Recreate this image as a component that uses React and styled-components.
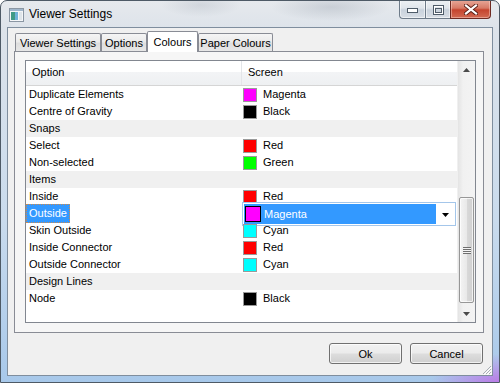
import React from "react";
import styled, { createGlobalStyle } from "styled-components";

const GlobalStyle = createGlobalStyle`
  html, body {
    margin: 0;
    padding: 0;
    background: #ffffff;
  }
  body {
    font-family: "Liberation Sans", Arial, sans-serif;
    font-size: 11px;
    color: #000;
  }
  * {
    box-sizing: border-box;
  }
`;

const rows = [
  { label: "Duplicate Elements", color: "#ff00ff", name: "Magenta" },
  { label: "Centre of Gravity", color: "#000000", name: "Black" },
  { group: "Snaps" },
  { label: "Select", color: "#ff0000", name: "Red" },
  { label: "Non-selected", color: "#00ff00", name: "Green" },
  { group: "Items" },
  { label: "Inside", color: "#ff0000", name: "Red" },
  { label: "Outside", color: "#ff00ff", name: "Magenta", editing: true },
  { label: "Skin Outside", color: "#00ffff", name: "Cyan" },
  { label: "Inside Connector", color: "#ff0000", name: "Red" },
  { label: "Outside Connector", color: "#00ffff", name: "Cyan" },
  { group: "Design Lines" },
  { label: "Node", color: "#000000", name: "Black" },
];

const tabs = [
  { label: "Viewer Settings", w: 86 },
  { label: "Options", w: 46 },
  { label: "Colours", w: 51, active: true },
  { label: "Paper Colours", w: 75 },
];

const WindowIcon = () => (
  <svg width="15" height="14" viewBox="0 0 15 14">
    <rect x="0.5" y="0.5" width="14" height="13" fill="#f4f6f8" stroke="#8a96a3" />
    <rect x="1" y="1" width="13" height="2" fill="#9fb6cc" />
    <rect x="2" y="4" width="4" height="8" fill="#3f9a86" />
    <rect x="6" y="4" width="3" height="8" fill="#6fb2d8" />
    <rect x="10" y="4" width="3" height="8" fill="#dfe5ea" />
  </svg>
);

const CloseGlyph = () => (
  <svg width="14" height="11" viewBox="0 0 14 11">
    <path d="M2 1.5 L12 9.5 M12 1.5 L2 9.5" stroke="#5a1f16" strokeWidth="4" strokeLinecap="square" />
    <path d="M2 1.5 L12 9.5 M12 1.5 L2 9.5" stroke="#ffffff" strokeWidth="2.2" strokeLinecap="square" />
  </svg>
);

const MinGlyph = () => (
  <svg width="11" height="5" viewBox="0 0 11 5">
    <rect x="0.5" y="0.5" width="10" height="4" fill="#ffffff" stroke="#4f5c69" />
  </svg>
);

const MaxGlyph = () => (
  <svg width="11" height="10" viewBox="0 0 11 10">
    <rect x="0.5" y="0.5" width="10" height="9" fill="none" stroke="#4f5c69" />
    <rect x="1.5" y="1.5" width="8" height="7" fill="none" stroke="#ffffff" />
    <rect x="2.5" y="3.5" width="6" height="4" fill="none" stroke="#4f5c69" />
  </svg>
);

const Arrow = ({ dir, color = "#4a4a4a" }) => (
  <svg width="7" height="4" viewBox="0 0 7 4">
    {dir === "up" ? (
      <path d="M0 4 L3.5 0 L7 4 Z" fill={color} />
    ) : (
      <path d="M0 0 L7 0 L3.5 4 Z" fill={color} />
    )}
  </svg>
);

const Grip = () => (
  <svg width="10" height="10" viewBox="0 0 10 10">
    <path d="M9 1 L1 9 M9 4 L4 9 M9 7 L7 9" stroke="#a8aeb5" strokeWidth="1" />
    <path d="M10 2 L2 10 M10 5 L5 10 M10 8 L8 10" stroke="#ffffff" strokeWidth="1" />
  </svg>
);

const App = () => {
  return (
    <>
      <GlobalStyle />
      <Window>
        <TitleBar>
          <IconWrap>
            <WindowIcon />
          </IconWrap>
          <Title>Viewer Settings</Title>
          <Captions>
            <CapButton $w={26} $first>
              <MinGlyph />
            </CapButton>
            <CapButton $w={25}>
              <MaxGlyph />
            </CapButton>
            <CloseButton>
              <CloseGlyph />
            </CloseButton>
          </Captions>
        </TitleBar>
        <Client>
          <TabStrip>
            {tabs.map((t) => (
              <Tab key={t.label} $w={t.w} className={t.active ? "active" : ""}>
                {t.label}
              </Tab>
            ))}
          </TabStrip>
          <TabPanel>
            <ListBox>
              <ListBody>
                <Header>
                  <HeadCell $w={215}>Option</HeadCell>
                  <HeadSep />
                  <HeadCell>Screen</HeadCell>
                </Header>
                {rows.map((r, i) =>
                  r.group ? (
                    <GroupRow key={i}>{r.group}</GroupRow>
                  ) : (
                    <Row key={i}>
                      <NameCell>
                        {r.editing ? <Selected>{r.label}</Selected> : r.label}
                      </NameCell>
                      <ValueCell>
                        <Swatch $color={r.color} />
                        <ValueText>{r.name}</ValueText>
                        {r.editing && (
                          <Combo>
                            <ComboValue>
                              <Swatch $color={r.color} $dark />
                              <ComboText>{r.name}</ComboText>
                            </ComboValue>
                            <ComboArrow>
                              <Arrow dir="down" color="#000" />
                            </ComboArrow>
                          </Combo>
                        )}
                      </ValueCell>
                    </Row>
                  )
                )}
              </ListBody>
              <ScrollBar>
                <ScrollArrow>
                  <Arrow dir="up" />
                </ScrollArrow>
                <Track>
                  <Thumb $top={119} $h={106}>
                    <ThumbGrip />
                  </Thumb>
                </Track>
                <ScrollArrow>
                  <Arrow dir="down" />
                </ScrollArrow>
              </ScrollBar>
            </ListBox>
          </TabPanel>
          <ButtonRow>
            <Button>Ok</Button>
            <Button>Cancel</Button>
          </ButtonRow>
          <ResizeGrip>
            <Grip />
          </ResizeGrip>
        </Client>
      </Window>
    </>
  );
};

export default App;

const Window = styled.div`
  position: relative;
  width: 500px;
  height: 383px;
  border: 1px solid #4e5a66;
  border-radius: 7px 7px 0 0;
  padding: 0 6px 6px 6px;
  display: flex;
  flex-direction: column;
  overflow: hidden;
  background:
    radial-gradient(ellipse 70px 30px at 500px 383px, rgba(190, 110, 230, 0.9), rgba(190, 110, 230, 0) 100%),
    radial-gradient(ellipse 60px 14px at 330px 6px, rgba(150, 160, 172, 0.35), rgba(150, 160, 172, 0) 100%),
    radial-gradient(ellipse 40px 12px at 200px 4px, rgba(150, 160, 172, 0.25), rgba(150, 160, 172, 0) 100%),
    linear-gradient(180deg, #e6e9ed 0px, #dde3ea 28px, #c9dbed 220px, #a7c8ea 383px);
`;

const TitleBar = styled.div`
  height: 26px;
  display: flex;
  align-items: flex-start;
`;

const IconWrap = styled.div`
  margin: 7px 0 0 2px;
  width: 15px;
  height: 14px;
  display: flex;
`;

const Title = styled.div`
  margin: 6px 0 0 5px;
  font-size: 12px;
  line-height: 15px;
  color: #000;
`;

const Captions = styled.div`
  margin-left: auto;
  margin-right: 2px;
  margin-top: -1px;
  display: flex;
  height: 19px;
`;

const CapButton = styled.div`
  width: ${(p) => p.$w}px;
  height: 19px;
  display: flex;
  align-items: center;
  justify-content: center;
  padding-top: 2px;
  border: 1px solid #6e7b89;
  border-top: none;
  border-right: none;
  border-radius: ${(p) => (p.$first ? "0 0 0 4px" : "0")};
  background: linear-gradient(180deg, #eef1f4 0%, #e0e5eb 45%, #c9d2dc 55%, #d8dee5 100%);
  box-shadow: inset 0 0 0 1px rgba(255, 255, 255, 0.55);
`;

const CloseButton = styled.div`
  width: 41px;
  height: 19px;
  display: flex;
  align-items: center;
  justify-content: center;
  padding-top: 1px;
  border: 1px solid #6e2a22;
  border-top: none;
  border-radius: 0 0 4px 0;
  background: linear-gradient(180deg, #e8a99a 0%, #d77a66 45%, #c5442e 55%, #d26a52 100%);
  box-shadow: inset 0 0 0 1px rgba(255, 220, 210, 0.45);
`;

const Client = styled.div`
  position: relative;
  flex: 1;
  display: flex;
  flex-direction: column;
  border: 1px solid #7f8e9e;
  background: #f0f0f0;
  padding: 3px 8px 0 6px;
`;

const TabStrip = styled.div`
  height: 20px;
  display: flex;
  align-items: flex-end;
  padding-left: 1px;
  position: relative;
  z-index: 1;
`;

const Tab = styled.div`
  width: ${(p) => p.$w}px;
  height: 18px;
  border: 1px solid #898c95;
  border-bottom: none;
  border-radius: 2px 2px 0 0;
  display: flex;
  align-items: center;
  justify-content: center;
  padding-top: 1px;
  font-size: 11px;
  color: #000;
  background: linear-gradient(180deg, #f5f5f5 0%, #ebebeb 45%, #dedede 55%, #e7e7e7 100%);
  &.active {
    height: 21px;
    margin-bottom: -1px;
    padding-bottom: 2px;
    background: #ffffff;
  }
`;

const TabPanel = styled.div`
  height: 282px;
  border: 1px solid #898c95;
  background: #f6f6f6;
  padding: 8px 7px 9px 10px;
  display: flex;
`;

const ListBox = styled.div`
  flex: 1;
  display: flex;
  border: 1px solid #828790;
  background: #ffffff;
`;

const ListBody = styled.div`
  width: 431px;
  display: flex;
  flex-direction: column;
`;

const Header = styled.div`
  height: 25px;
  display: flex;
  border-bottom: 1px solid #d5d5d5;
  background: linear-gradient(180deg, #ffffff 0%, #ffffff 45%, #f3f4f6 45%, #eef0f2 100%);
`;

const HeadCell = styled.div`
  width: ${(p) => (p.$w ? `${p.$w}px` : "auto")};
  flex: ${(p) => (p.$w ? "none" : "1")};
  padding-left: 6px;
  line-height: 23px;
  font-size: 11px;
  color: #000;
`;

const HeadSep = styled.div`
  width: 1px;
  background: #e3e5e8;
`;

const Row = styled.div`
  height: 17px;
  display: flex;
  align-items: center;
`;

const GroupRow = styled.div`
  height: 17px;
  line-height: 17px;
  padding-left: 3px;
  background: #f0f0f0;
`;

const NameCell = styled.div`
  width: 215px;
  padding-left: 3px;
  line-height: 17px;
  white-space: nowrap;
`;

const Selected = styled.span`
  display: inline-block;
  margin-left: -3px;
  padding: 0 3px;
  height: 19px;
  margin-top: -1px;
  margin-bottom: -1px;
  line-height: 18px;
  color: #ffffff;
  background: #3399ff;
  outline: 1px dotted #d08a4a;
  outline-offset: -1px;
`;

const ValueCell = styled.div`
  position: relative;
  flex: 1;
  height: 17px;
  display: flex;
  align-items: center;
  padding-left: 2px;
`;

const Swatch = styled.div`
  width: ${(p) => (p.$dark ? 16 : 14)}px;
  height: ${(p) => (p.$dark ? 16 : 14)}px;
  border: 1px solid ${(p) => (p.$dark ? "#000000" : "#9a9a9a")};
  background: ${(p) => p.$color};
  flex: none;
`;

const ValueText = styled.span`
  margin-left: 6px;
  line-height: 17px;
`;

const Combo = styled.div`
  position: absolute;
  top: -3px;
  left: 1px;
  right: 1px;
  height: 24px;
  display: flex;
  border: 1px solid #a4c6ea;
  background: #ffffff;
  padding: 1px;
`;

const ComboValue = styled.div`
  width: 192px;
  height: 20px;
  display: flex;
  align-items: center;
  padding-left: 1px;
  background: #3399ff;
`;

const ComboText = styled.span`
  margin-left: 3px;
  color: #ffffff;
  line-height: 17px;
`;

const ComboArrow = styled.div`
  flex: 1;
  display: flex;
  align-items: center;
  justify-content: center;
  padding-left: 1px;
  padding-top: 1px;
`;

const ScrollBar = styled.div`
  flex: 1;
  display: flex;
  flex-direction: column;
  background: linear-gradient(90deg, #e4e4e4 0%, #f1f1f1 30%, #f3f3f3 100%);
  border-left: 1px solid #f0f0f0;
`;

const ScrollArrow = styled.div`
  height: 17px;
  display: flex;
  align-items: center;
  justify-content: center;
`;

const Track = styled.div`
  flex: 1;
  display: flex;
  flex-direction: column;
  padding: 0 1px;
`;

const Thumb = styled.div`
  margin-top: ${(p) => p.$top}px;
  height: ${(p) => p.$h}px;
  border: 1px solid #979797;
  border-radius: 2px;
  background: linear-gradient(90deg, #f4f4f4 0%, #e9e9e9 50%, #d9d9d9 51%, #d0d0d0 100%);
  box-shadow: inset 0 0 0 1px rgba(255, 255, 255, 0.7);
  display: flex;
  align-items: center;
  justify-content: center;
`;

const ThumbGrip = styled.div`
  width: 8px;
  height: 7px;
  background: repeating-linear-gradient(180deg, #6f6f6f 0px, #6f6f6f 1px, #f4f4f4 1px, #f4f4f4 2px);
`;

const ButtonRow = styled.div`
  display: flex;
  justify-content: flex-end;
  gap: 8px;
  margin-top: 10px;
  margin-right: 1px;
`;

const Button = styled.div`
  width: 73px;
  height: 21px;
  border: 1px solid #707070;
  border-radius: 3px;
  display: flex;
  align-items: center;
  justify-content: center;
  font-size: 11px;
  background: linear-gradient(180deg, #f2f2f2 0%, #ebebeb 48%, #dddddd 52%, #cfcfcf 100%);
  box-shadow: inset 0 0 0 1px rgba(255, 255, 255, 0.7);
`;

const ResizeGrip = styled.div`
  position: absolute;
  right: 0;
  bottom: 0;
  width: 10px;
  height: 10px;
  display: flex;
`;
